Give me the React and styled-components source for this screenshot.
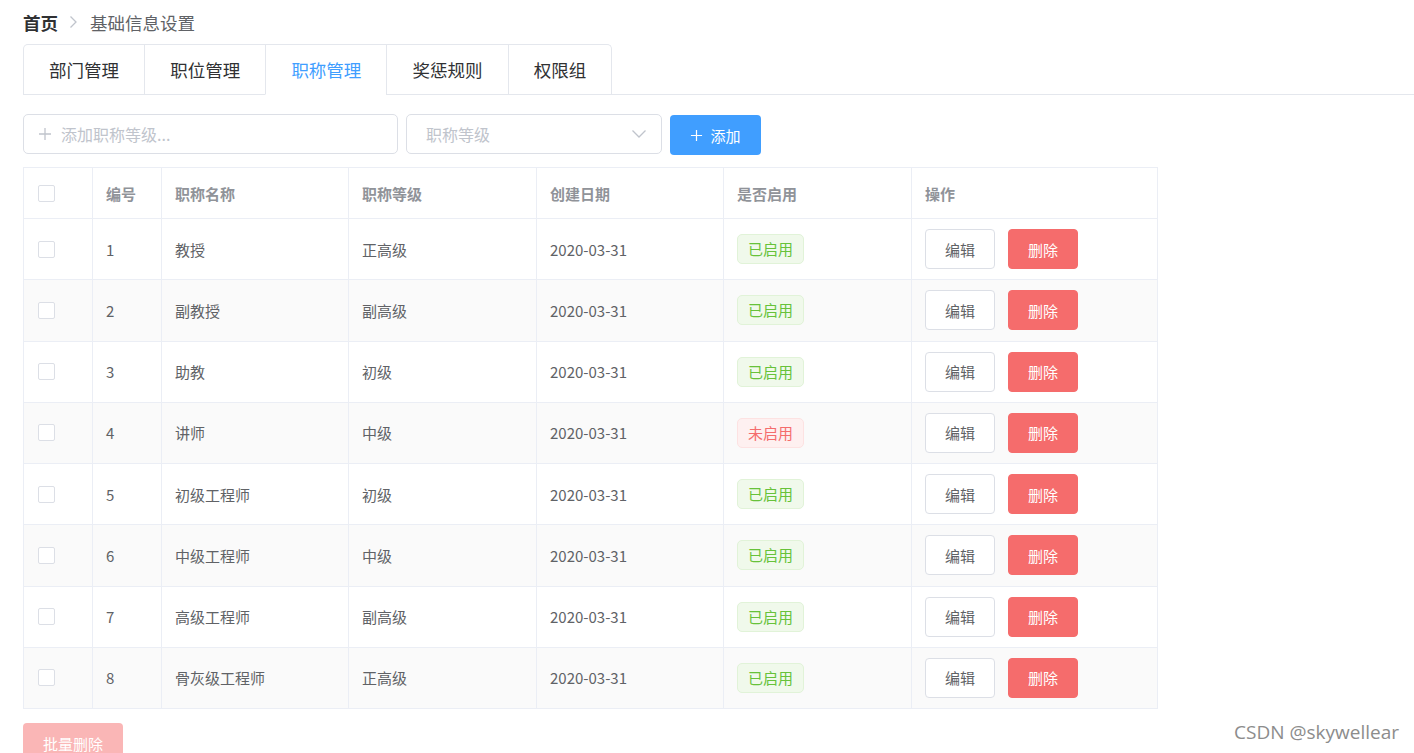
import React from 'react'
import styled, { createGlobalStyle } from 'styled-components'

const GlobalStyle = createGlobalStyle`
  html, body {
    margin: 0;
    padding: 0;
    background: #fff;
    overflow: hidden;
  }
  body {
    font-family: "Noto Sans CJK SC", "Noto Sans", "Liberation Sans", sans-serif;
    color: #606266;
  }
`

const rows = [
  { id: 1, name: '教授', level: '正高级', date: '2020-03-31', enabled: true },
  { id: 2, name: '副教授', level: '副高级', date: '2020-03-31', enabled: true },
  { id: 3, name: '助教', level: '初级', date: '2020-03-31', enabled: true },
  { id: 4, name: '讲师', level: '中级', date: '2020-03-31', enabled: false },
  { id: 5, name: '初级工程师', level: '初级', date: '2020-03-31', enabled: true },
  { id: 6, name: '中级工程师', level: '中级', date: '2020-03-31', enabled: true },
  { id: 7, name: '高级工程师', level: '副高级', date: '2020-03-31', enabled: true },
  { id: 8, name: '骨灰级工程师', level: '正高级', date: '2020-03-31', enabled: true },
]

const tabs = ['部门管理', '职位管理', '职称管理', '奖惩规则', '权限组']

const PlusIcon = ({ size = 14, color = 'currentColor' }) => (
  <svg width={size} height={size} viewBox='0 0 14 14' fill='none'>
    <path d='M7 1v12M1 7h12' stroke={color} strokeWidth='1.3' />
  </svg>
)

const App = () => {
  return (
    <Page>
      <GlobalStyle />
      <Breadcrumb>
        <strong>首页</strong>
        <Sep viewBox='0 0 10 14' fill='none'>
          <path d='M2.5 1.5L8 7l-5.5 5.5' stroke='#C0C4CC' strokeWidth='1.3' />
        </Sep>
        <span>基础信息设置</span>
      </Breadcrumb>

      <TabsHeader>
        <TabNav>
          {tabs.map((t) => (
            <Tab key={t} active={t === '职称管理'}>
              {t}
            </Tab>
          ))}
        </TabNav>
      </TabsHeader>

      <Toolbar>
        <Input width={375}>
          <PlusIcon size={14} color='#C0C4CC' />
          <span>添加职称等级...</span>
        </Input>
        <Select>
          <span>职称等级</span>
          <svg width='16' height='10' viewBox='0 0 16 10' fill='none'>
            <path d='M1.5 1.5L8 8l6.5-6.5' stroke='#C0C4CC' strokeWidth='1.3' />
          </svg>
        </Select>
        <PrimaryButton>
          <PlusIcon size={13} color='#fff' />
          添加
        </PrimaryButton>
      </Toolbar>

      <Table>
        <colgroup>
          <col style={{ width: 69 }} />
          <col style={{ width: 69 }} />
          <col style={{ width: 187 }} />
          <col style={{ width: 188 }} />
          <col style={{ width: 187 }} />
          <col style={{ width: 188 }} />
          <col style={{ width: 246 }} />
        </colgroup>
        <thead>
          <tr>
            <Th>
              <Checkbox />
            </Th>
            <Th>编号</Th>
            <Th>职称名称</Th>
            <Th>职称等级</Th>
            <Th>创建日期</Th>
            <Th>是否启用</Th>
            <Th>操作</Th>
          </tr>
        </thead>
        <tbody>
          {rows.map((r, i) => (
            <Row key={r.id} striped={i % 2 === 1}>
              <Td>
                <Checkbox />
              </Td>
              <Td>{r.id}</Td>
              <Td>{r.name}</Td>
              <Td>{r.level}</Td>
              <Td>{r.date}</Td>
              <Td>
                <Tag danger={!r.enabled}>{r.enabled ? '已启用' : '未启用'}</Tag>
              </Td>
              <Td>
                <Actions>
                  <Button>编辑</Button>
                  <Button danger>删除</Button>
                </Actions>
              </Td>
            </Row>
          ))}
        </tbody>
      </Table>

      <BatchButton>批量删除</BatchButton>

      <Watermark>CSDN @skywellear</Watermark>
    </Page>
  )
}

const Page = styled.div`
  position: relative;
  height: 753px;
  padding-left: 23px;
  box-sizing: border-box;
  overflow: hidden;
`

const Breadcrumb = styled.div`
  display: flex;
  align-items: center;
  height: 44px;
  font-size: 17.5px;
  color: #606266;
  strong {
    color: #303133;
    font-weight: 700;
  }
`

const Sep = styled.svg`
  width: 10px;
  height: 14px;
  margin: 0 12px 0 10px;
`

const TabsHeader = styled.div`
  border-bottom: 1px solid #e4e7ed;
  margin-bottom: 19px;
  display: flex;
`

const TabNav = styled.div`
  display: flex;
  border: 1px solid #e4e7ed;
  border-bottom: none;
  border-radius: 5px 5px 0 0;
  margin-bottom: -1px;
`

const Tab = styled.div`
  height: 49px;
  line-height: 49px;
  padding: 0 25px 0 25.2px;
  font-size: 17.5px;
  color: ${(p) => (p.active ? '#409EFF' : '#303133')};
  border-left: 1px solid #e4e7ed;
  border-bottom: 1px solid ${(p) => (p.active ? '#fff' : 'transparent')};
  &:first-child {
    border-left: none;
    padding-left: 25px;
  }
`

const Toolbar = styled.div`
  display: flex;
  align-items: flex-start;
  gap: 8px;
  margin-bottom: 12px;
`

const Input = styled.div`
  width: ${(p) => p.width}px;
  height: 40px;
  box-sizing: border-box;
  border: 1px solid #dcdfe6;
  border-radius: 5px;
  display: flex;
  align-items: center;
  padding-left: 14px;
  gap: 9px;
  font-size: 16px;
  color: #c0c4cc;
`

const Select = styled.div`
  width: 256px;
  height: 40px;
  box-sizing: border-box;
  border: 1px solid #dcdfe6;
  border-radius: 5px;
  display: flex;
  align-items: center;
  justify-content: space-between;
  padding: 0 14px 0 19px;
  font-size: 16px;
  color: #c0c4cc;
`

const PrimaryButton = styled.div`
  width: 91px;
  height: 40px;
  margin-top: 1px;
  box-sizing: border-box;
  background: #409eff;
  border-radius: 4px;
  color: #fff;
  font-size: 15px;
  display: flex;
  align-items: center;
  justify-content: center;
  gap: 7px;
`

const Table = styled.table`
  width: 1134px;
  table-layout: fixed;
  border-collapse: collapse;
  border: 1px solid #ebeef5;
  font-size: 15px;
`

const Th = styled.th`
  height: 51px;
  padding: 0 13px;
  text-align: left;
  font-weight: 700;
  color: #909399;
  border: 1px solid #ebeef5;
  box-sizing: border-box;
`

const Row = styled.tr`
  background: ${(p) => (p.striped ? '#fafafa' : '#fff')};
`

const Td = styled.td`
  height: 61.25px;
  padding: 0 13px;
  color: #606266;
  border: 1px solid #ebeef5;
  box-sizing: border-box;
`

const Checkbox = styled.span`
  display: block;
  width: 17px;
  height: 17px;
  box-sizing: border-box;
  border: 1px solid #dcdfe6;
  border-radius: 2px;
  background: #fff;
  margin-left: 1px;
`

const Tag = styled.span`
  display: inline-block;
  height: 30px;
  line-height: 28px;
  padding: 0 10px;
  box-sizing: border-box;
  border-radius: 5px;
  font-size: 15px;
  background: ${(p) => (p.danger ? '#fef0f0' : '#f0f9eb')};
  border: 1px solid ${(p) => (p.danger ? '#fde2e2' : '#e1f3d8')};
  color: ${(p) => (p.danger ? '#f56c6c' : '#67c23a')};
`

const Actions = styled.div`
  display: flex;
  gap: 13px;
`

const Button = styled.div`
  width: 70px;
  height: 40px;
  box-sizing: border-box;
  border-radius: 4px;
  font-size: 15px;
  display: flex;
  align-items: center;
  justify-content: center;
  background: ${(p) => (p.danger ? '#f56c6c' : '#fff')};
  border: 1px solid ${(p) => (p.danger ? '#f56c6c' : '#dcdfe6')};
  color: ${(p) => (p.danger ? '#fff' : '#606266')};
`

const BatchButton = styled.div`
  margin-top: 14px;
  width: 100px;
  height: 40px;
  box-sizing: border-box;
  border-radius: 4px;
  background: #fab6b6;
  color: #fff;
  font-size: 15px;
  display: flex;
  align-items: center;
  justify-content: center;
`

const Watermark = styled.div`
  position: absolute;
  right: 15px;
  bottom: 8px;
  font-family: "Open Sans", "Noto Sans", sans-serif;
  font-size: 19px;
  color: #8c8c8c;
  text-shadow: 0 0 2px #fff;
`

export default App
